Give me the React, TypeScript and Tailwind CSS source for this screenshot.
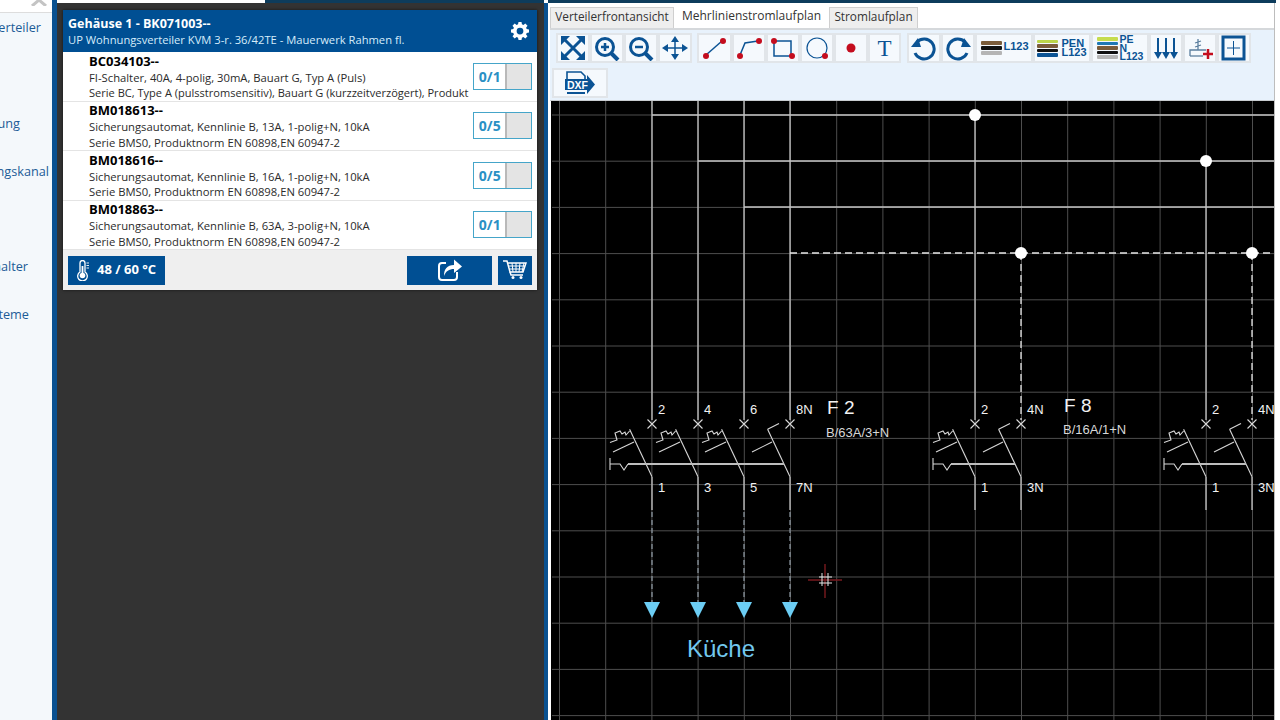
import React from "react";

const B = "#0b5394";
const R = "#c40d1e";

function Btn({ w, children }: { w: string; children: React.ReactNode }) {
  return (
    <div className={`${w} h-[30px] shrink-0 border-2 border-[#e1e5e9] bg-[#f5f9fd] flex items-center justify-center`}>
      {children}
    </div>
  );
}

function Ico({ w = 30, h = 26, children }: { w?: number; h?: number; children: React.ReactNode }) {
  return (
    <svg width={w} height={h} viewBox={`0 0 ${w} ${h}`} fill="none">
      {children}
    </svg>
  );
}

function Bars({ colors, h }: { colors: string[]; h: string }) {
  return (
    <div className="flex flex-col gap-[1px] w-[21px] shrink-0">
      {colors.map((c, i) => (
        <div key={i} className={`${h} rounded-[1px]`} style={{ background: c }} />
      ))}
    </div>
  );
}

function Toolbar() {
  return (
    <div className="h-[73px] bg-[#e8f2fc] border-t-2 border-b border-t-[#d5d8db] border-b-[#c8ccd0] pl-[1px]">
      <div className="flex pl-[5px] pt-[3px]">
        <Btn w="w-[34px]">
          <Ico>
            <g stroke={B} strokeWidth="3">
              <path d="M7 5 L23 21 M23 5 L7 21" />
            </g>
            <g fill={B}>
              <path d="M3 1 H12 L3 10 Z M27 1 V10 L18 1 Z M3 25 V16 L12 25 Z M27 25 H18 L27 16 Z" />
            </g>
          </Ico>
        </Btn>
        <Btn w="w-[34px]">
          <Ico>
            <circle cx="13" cy="12" r="8.5" stroke={B} strokeWidth="3" />
            <path d="M19 18 L26 25" stroke={B} strokeWidth="4" />
            <path d="M9 12 H17 M13 8 V16" stroke={B} strokeWidth="2.5" />
          </Ico>
        </Btn>
        <Btn w="w-[34px]">
          <Ico>
            <circle cx="13" cy="12" r="8.5" stroke={B} strokeWidth="3" />
            <path d="M19 18 L26 25" stroke={B} strokeWidth="4" />
            <path d="M9 12 H17" stroke={B} strokeWidth="2.5" />
          </Ico>
        </Btn>
        <Btn w="w-[34px]">
          <Ico>
            <path d="M4 13 H26 M15 3 V23" stroke={B} strokeWidth="1.5" />
            <path fill={B} d="M2 13 L8 9 V17 Z M28 13 L22 9 V17 Z M15 1 L19 7 H11 Z M15 25 L19 19 H11 Z" />
          </Ico>
        </Btn>
        <div className="w-[5px] shrink-0" />
        <Btn w="w-[35px]">
          <Ico>
            <path d="M6 20 L22 6" stroke={B} strokeWidth="1.5" />
            <circle cx="6" cy="21" r="3" fill={R} />
            <circle cx="23" cy="6" r="3" fill={R} />
          </Ico>
        </Btn>
        <Btn w="w-[34px]">
          <Ico>
            <path d="M6 20 L11 8 L24 6" stroke={B} strokeWidth="1.5" />
            <circle cx="6" cy="21" r="3" fill={R} />
            <circle cx="25" cy="6" r="3" fill={R} />
          </Ico>
        </Btn>
        <Btn w="w-[34px]">
          <Ico>
            <path d="M6 6 H23 V21 H6 Z" stroke={B} strokeWidth="1.5" />
            <circle cx="6" cy="6" r="3" fill={R} />
            <circle cx="24" cy="21" r="3" fill={R} />
          </Ico>
        </Btn>
        <Btn w="w-[34px]">
          <Ico>
            <circle cx="15" cy="13" r="10" stroke={B} strokeWidth="1.2" />
            <circle cx="23" cy="21" r="3" fill={R} />
          </Ico>
        </Btn>
        <Btn w="w-[34px]">
          <Ico>
            <circle cx="15" cy="13" r="4.5" fill={R} />
          </Ico>
        </Btn>
        <Btn w="w-[33px]">
          <span className="font-['Liberation_Serif',serif] text-[23px] leading-none text-[#0b5394]">T</span>
        </Btn>
        <div className="w-[6px] shrink-0" />
        <Btn w="w-[34px]">
          <Ico>
            <path d="M8 7 A10 10 0 1 1 6 18" stroke={B} strokeWidth="3" />
            <path fill={B} d="M2 12 H12 L9 3 Z" />
          </Ico>
        </Btn>
        <Btn w="w-[34px]">
          <Ico>
            <path d="M22 7 A10 10 0 1 0 24 18" stroke={B} strokeWidth="3" />
            <path fill={B} d="M28 12 H18 L21 3 Z" />
          </Ico>
        </Btn>
        <Btn w="w-[58px]">
          <div className="flex items-start gap-[1px] pl-[2px] font-['Liberation_Sans',sans-serif] font-bold text-[11px] leading-[10px] text-[#0b5394]">
            <Bars colors={["#7b5c3a", "#111111", "#b5b5b5"]} h="h-[4px]" />
            <span>L123</span>
          </div>
        </Btn>
        <Btn w="w-[58px]">
          <div className="flex items-center gap-[3px] font-['Liberation_Sans',sans-serif] font-bold text-[11px] leading-[9px] text-[#0b5394]">
            <Bars colors={["#bcd64a", "#7b5c3a", "#111111", "#0b5394"]} h="h-[3.5px]" />
            <span>
              PEN
              <br />
              L123
            </span>
          </div>
        </Btn>
        <Btn w="w-[58px]">
          <div className="flex items-center gap-[2px] font-['Liberation_Sans',sans-serif] font-bold text-[10.5px] leading-[8.5px] text-[#0b5394]">
            <Bars colors={["#c6dc4e", "#1f78b4", "#7b5c3a", "#111111", "#b5b5b5"]} h="h-[3.5px]" />
            <span>
              PE
              <br />
              N
              <br />
              L123
            </span>
          </div>
        </Btn>
        <Btn w="w-[34px]">
          <Ico>
            <path d="M7 3 V19 M15 3 V19 M23 3 V19" stroke={B} strokeWidth="2" />
            <path fill={B} d="M3 17 H11 L7 24 Z M11 17 H19 L15 24 Z M19 17 H27 L23 24 Z" />
          </Ico>
        </Btn>
        <Btn w="w-[34px]">
          <Ico>
            <path d="M5 21 V15 H21 M13 15 V4 M10 8 L16 6 M10 12 L16 10" stroke="#5b7f9f" strokeWidth="1.3" />
            <path d="M5 21 H18" stroke="#5b7f9f" strokeWidth="1.3" />
            <path d="M18 19 H28 M23 14 V24" stroke={R} strokeWidth="2.5" />
          </Ico>
        </Btn>
        <Btn w="w-[34px]">
          <Ico>
            <rect x="4" y="2" width="21" height="22" stroke={B} strokeWidth="3" />
            <path d="M8 13 H21 M14.5 6 V20" stroke={B} strokeWidth="1" />
          </Ico>
        </Btn>
      </div>
      <div className="pl-[1px] pt-[5px]">
        <div className="w-[56px] h-[30px] border-2 border-[#e1e5e9] bg-[#f5f9fd] flex items-center justify-center">
          <svg width="34" height="26" viewBox="0 0 34 26" fill="none">
            <path d="M4 20 V2 H18 L22 6 V9" stroke={B} strokeWidth="1.6" />
            <path d="M4 23 H22" stroke={B} strokeWidth="2" />
            <path d="M2 9 H24 V5 L32 14.5 L24 24 V20 H2 Z" fill={B} />
            <text x="4" y="19" fontFamily="'Liberation Sans',sans-serif" fontWeight="700" fontSize="10.5" fill="#ffffff">
              DXF
            </text>
          </svg>
        </div>
      </div>
    </div>
  );
}

const gridX = Array.from({ length: 16 }, (_, i) => 559.5 + i * 46.2);
const gridY = Array.from({ length: 14 }, (_, i) => 115 + i * 46.2);

function Contact({ x, thermal }: { x: number; thermal: boolean }) {
  return (
    <g transform={`translate(${x} 0)`} stroke="#d8d8d8" strokeWidth="1.1" fill="none">
      <path d="M-4.5 419.500 L4.500 428.500 M4.500 419.500 L-4.500 428.500" />
      <path d="M0 476.7 L-22.4 429.3" />
      {thermal ? (
        <>
          <path d="M-42 442.5 L-35 440 L-37 433 L-32 431 L-30 434 L-27 432 L-26 435 L-22.4 431" />
          <path d="M-39 452 L-18 442" />
        </>
      ) : (
        <>
          <path d="M-22.4 429.3 L-11 423.5" />
          <path d="M-38 452 L-18 442" />
        </>
      )}
    </g>
  );
}

function Breaker({ poles, thermal }: { poles: number[]; thermal: number }) {
  const first = poles[0];
  const last = poles[poles.length - 1];
  return (
    <g>
      {poles.map((p, i) => (
        <Contact key={p} x={p} thermal={i < thermal} />
      ))}
      <path
        d={`M${first - 42} 458 V470 M${first - 42} 464 H${first - 32} L${first - 28} 470 L${first - 24} 464`}
        stroke="#d8d8d8"
        strokeWidth="1.1"
        fill="none"
      />
      <path d={`M${first - 24} 464 H${last - 6}`} stroke="#bdbdbd" strokeWidth="2" />
    </g>
  );
}

function Label({ x, y, t, size = 13, color = "#f2f2f2" }: { x: number; y: number; t: string; size?: number; color?: string }) {
  return (
    <text x={x} y={y} fontSize={size} fill={color} fontFamily="'Liberation Sans',sans-serif">
      {t}
    </text>
  );
}

function Canvas() {
  const poles = [652, 698, 744, 790];
  return (
    <div className="flex-1 ml-[1px] bg-black overflow-hidden">
      <svg width="725" height="619" viewBox="551 101 725 619" className="block">
        {gridX.map((x) => (
          <path key={x} d={`M${x} 101 V720`} stroke="#4e4e4e" strokeWidth="1" />
        ))}
        {gridY.map((y) => (
          <path key={y} d={`M552 ${y} H1276`} stroke="#4e4e4e" strokeWidth="1" />
        ))}
        <g stroke="#c4c4c4" strokeWidth="1.3" fill="none">
          <path d="M652 115 H1276 M698 161 H1276 M744 207 H1276" />
          <path d="M652 101 V420 M698 101 V420 M744 101 V420 M790 101 V420" />
          <path d="M652 477 V510 M698 477 V510 M744 477 V510 M790 477 V510" />
          <path d="M975 115 V420 M1206 161 V420" />
          <path d="M975 477 V510 M1021 477 V510 M1206 477 V510 M1252 477 V510" />
        </g>
        <g stroke="#e6e6e6" strokeWidth="1.3" fill="none" strokeDasharray="7 4">
          <path d="M790 253 H1276 M1021 253 V420 M1252 253 V420" />
        </g>
        <g stroke="#8f9ba5" strokeWidth="1.2" fill="none" strokeDasharray="5 3">
          <path d="M652 512 V602 M698 512 V602 M744 512 V602 M790 512 V602" />
        </g>
        <g fill="#ffffff">
          <circle cx="975" cy="115" r="6" />
          <circle cx="1206" cy="161" r="6" />
          <circle cx="1021" cy="253" r="6" />
          <circle cx="1252" cy="253" r="6" />
        </g>
        <Breaker poles={poles} thermal={3} />
        <Breaker poles={[975, 1021]} thermal={1} />
        <Breaker poles={[1206, 1252]} thermal={1} />
        <Label x={658} y={414} t="2" />
        <Label x={704} y={414} t="4" />
        <Label x={750} y={414} t="6" />
        <Label x={796} y={414} t="8N" />
        <Label x={658} y={492} t="1" />
        <Label x={704} y={492} t="3" />
        <Label x={750} y={492} t="5" />
        <Label x={796} y={492} t="7N" />
        <Label x={981} y={414} t="2" />
        <Label x={1027} y={414} t="4N" />
        <Label x={981} y={492} t="1" />
        <Label x={1027} y={492} t="3N" />
        <Label x={1212} y={414} t="2" />
        <Label x={1258} y={414} t="4N" />
        <Label x={1212} y={492} t="1" />
        <Label x={1258} y={492} t="3N" />
        <Label x={827} y={414} t="F 2" size={19} />
        <Label x={826} y={437} t="B/63A/3+N" size={13} color="#d8d8d8" />
        <Label x={1064} y={412} t="F 8" size={19} />
        <Label x={1063} y={434} t="B/16A/1+N" size={13} color="#d8d8d8" />
        {poles.map((x) => (
          <path key={x} d={`M${x - 8} 602 H${x + 8} L${x} 618 Z`} fill="#6ccdf4" />
        ))}
        <Label x={687} y={657} t="Küche" size={24} color="#72c8ee" />
        <path d="M808 580 H842 M825 564 V598" stroke="#7a1a1f" strokeWidth="1.4" />
        <path d="M822 573 V586 M828 573 V586 M819 577 H832 M819 583 H832" stroke="#e8e8e8" strokeWidth="1" />
      </svg>
    </div>
  );
}

function Tabs() {
  return (
    <div className="h-[25px] bg-white flex items-end font-['Open_Sans',sans-serif] text-[11.8px] text-[#333333]">
      <div className="w-[124px] h-[21px] pb-[2px] bg-[#eeeeee] border border-b-0 border-[#cfcfcf] flex items-center justify-center">
        Verteilerfrontansicht
      </div>
      <div className="w-[155px] h-[25px] bg-white flex items-center justify-center text-[12px]">Mehrlinienstromlaufplan</div>
      <div className="w-[89px] h-[21px] pb-[2px] bg-[#eeeeee] border border-b-0 border-[#cfcfcf] flex items-center justify-center">
        Stromlaufplan
      </div>
    </div>
  );
}

function Item({ code, a, b, n, bCls = "" }: { code: string; a: string; b: string; n: string; bCls?: string }) {
  return (
    <div className="h-[49.5px] bg-white border-b border-[#e4e4e4] flex items-center pl-[26px] pr-[5px]">
      <div className="w-[384px] overflow-hidden whitespace-nowrap text-[#2b2b2b] text-[11.25px] leading-[15.5px]">
        <div className="font-bold text-[13px] leading-[18px] text-black">{code}</div>
        <div>{a}</div>
        <div className={bCls}>{b}</div>
      </div>
      <div className="ml-[2px] w-[59px] h-[27px] border border-[#45a5c9] flex">
        <div className="w-[31px] bg-white flex items-center justify-center font-bold text-[14px] text-[#2a90c4]">{n}</div>
        <div className="flex-1 bg-[#e4e4e4] border-l-2 border-[#b9b9b9]" />
      </div>
    </div>
  );
}

function Card() {
  const sa = "Sicherungsautomat, Kennlinie B, ";
  const sb = "Serie BMS0, Produktnorm EN 60898,EN 60947-2";
  return (
    <div className="w-[474px] h-[280px] flex flex-col font-['Open_Sans',sans-serif] shadow-[0_0_3px_rgba(0,0,0,0.6)]">
      <div className="h-[42px] bg-[#004f93] flex items-center justify-between pl-[5px] pr-[8px]">
        <div className="text-[11.2px] leading-[16px] pt-[1px]">
          <div className="font-bold text-[12.5px] text-white">Gehäuse 1 - BK071003--</div>
          <div className="text-[#d6ecfa]">UP Wohnungsverteiler KVM 3-r. 36/42TE - Mauerwerk Rahmen fl.</div>
        </div>
        <svg width="18" height="18" viewBox="0 0 24 24" fill="#ffffff">
          <path
            fillRule="evenodd"
            d="M10 1h4l.6 3.1 1.9.8L19.1 3 22 5.900l-1.900 2.600.8 1.900L24 11v4l-3.100.6-.8 1.900L22 20.100 19.100 23l-2.600-1.900-1.900.8L14 25h-4l-.6-3.100-1.900-.8L4.900 23 2 20.100l1.900-2.600-.8-1.900L0 15v-4l3.100-.6.800-1.900L2 5.900 4.900 3l2.600 1.900 1.900-.8zM12 8.500a4.500 4.500 0 1 0 0 9 4.500 4.500 0 0 0 0-9z"
            transform="translate(0 -1)"
          />
        </svg>
      </div>
      <Item
        code="BC034103--"
        a="FI-Schalter, 40A, 4-polig, 30mA, Bauart G, Typ A (Puls)"
        b="Serie BC, Type A (pulsstromsensitiv), Bauart G (kurzzeitverzögert), Produkt"
        bCls="text-[11.05px]"
        n="0/1"
      />
      <Item code="BM018613--" a={sa + "13A, 1-polig+N, 10kA"} b={sb} n="0/5" />
      <Item code="BM018616--" a={sa + "16A, 1-polig+N, 10kA"} b={sb} n="0/5" />
      <Item code="BM018863--" a={sa + "63A, 3-polig+N, 10kA"} b={sb} n="0/1" />
      <div className="flex-1 bg-[#efefef] flex items-center pl-[5px] pr-[5px]">
        <div className="w-[97px] h-[29px] bg-[#004f93] flex items-center pl-[8px] gap-[7px] text-white font-bold text-[13px]">
          <svg width="14" height="21" viewBox="0 0 14 21" fill="none" stroke="#ffffff">
            <path d="M4 12 V3 a2.500 2.500 0 0 1 5 0 V12 a4.800 4.800 0 1 1 -5 0 Z" strokeWidth="1.3" />
            <circle cx="6.500" cy="15.500" r="2.800" fill="#ffffff" stroke="none" />
            <path d="M6.500 14 V6" strokeWidth="1.800" />
            <path d="M10.500 3 H13 M10.500 5.500 H13 M10.500 8 H13" strokeWidth="0.900" />
          </svg>
          48 / 60 °C
        </div>
        <div className="ml-auto w-[85px] h-[29px] bg-[#004f93] flex items-center justify-center">
          <svg width="26" height="24" viewBox="0 0 26 24" fill="none">
            <path d="M9 5 H5 a3 3 0 0 0 -3 3 V19 a3 3 0 0 0 3 3 H17 a3 3 0 0 0 3 -3 V14" stroke="#ffffff" strokeWidth="2" />
            <path fill="#ffffff" d="M7 18 C7 11 10 7 17 7 V1.500 L25 8.500 L17 15 V11 C12 11 9 13 7 18 Z" />
          </svg>
        </div>
        <div className="ml-[6px] w-[34px] h-[29px] bg-[#004f93] flex items-center justify-center">
          <svg width="24" height="20" viewBox="0 0 24 20" fill="none" stroke="#ffffff" strokeWidth="1">
            <path d="M0 1 H4 L7 12 H20 L23 3 H4.500" strokeWidth="1.500" />
            <path d="M5 6 H22 M6 9 H21 M9 3 L10 12 M13 3 V12 M17 3 L16 12 M21 3 L19 12" />
            <path d="M7 12 L8 15 H20" strokeWidth="1.500" />
            <circle cx="10" cy="17.500" r="1.500" fill="#ffffff" stroke="none" />
            <circle cx="18" cy="17.500" r="1.500" fill="#ffffff" stroke="none" />
          </svg>
        </div>
      </div>
    </div>
  );
}

function SideItem({ t, cls }: { t: string; cls: string }) {
  return (
    <div className={`${cls} h-[20px] flex items-center justify-end whitespace-nowrap overflow-hidden text-[12.7px] text-[#1d5c97]`}>{t}</div>
  );
}

export default function App() {
  return (
    <div className="w-[1280px] h-[720px] overflow-hidden flex bg-white">
      <aside className="w-[52px] shrink-0 bg-[#f4f8fb] font-['Open_Sans',sans-serif]">
        <div className="h-[13px] bg-white border-b border-[#dddddd] flex justify-end items-start overflow-hidden pr-[5px]">
          <svg width="16" height="6" viewBox="0 0 16 6">
            <path d="M1 -6 L15 6 M15 -6 L1 6" stroke="#c4c4c4" strokeWidth="3" />
          </svg>
        </div>
        <div>
          <SideItem t="verteiler" cls="mt-[5px] pr-[11px]" />
          <SideItem t="ung" cls="mt-[76px] pr-[32px]" />
          <SideItem t="ngskanal" cls="mt-[28px] pr-[3px]" />
          <SideItem t="halter" cls="mt-[75px] pr-[24px]" />
          <SideItem t="teme" cls="mt-[28px] pr-[23px]" />
        </div>
      </aside>
      <div className="w-[5px] shrink-0 bg-[#0a5190]" />
      <main className="w-[487px] shrink-0 bg-[#333333] flex flex-col">
        <div className="h-[3px] flex bg-[#0d3c5c]">
          <div className="w-[208px] bg-white" />
        </div>
        <div className="pt-[7px] pl-[6px]">
          <Card />
        </div>
      </main>
      <div className="w-[4px] shrink-0 bg-[#0a5190] mt-[3px]" />
      <section className="w-[728px] shrink-0 flex flex-col bg-white">
        <div className="h-[3px] bg-[#0d3c5c]" />
        <div className="flex-1 flex flex-col pl-[2px] w-[727px] border-r border-[#bdbdbd]">
          <Tabs />
          <Toolbar />
          <Canvas />
        </div>
      </section>
    </div>
  );
}
